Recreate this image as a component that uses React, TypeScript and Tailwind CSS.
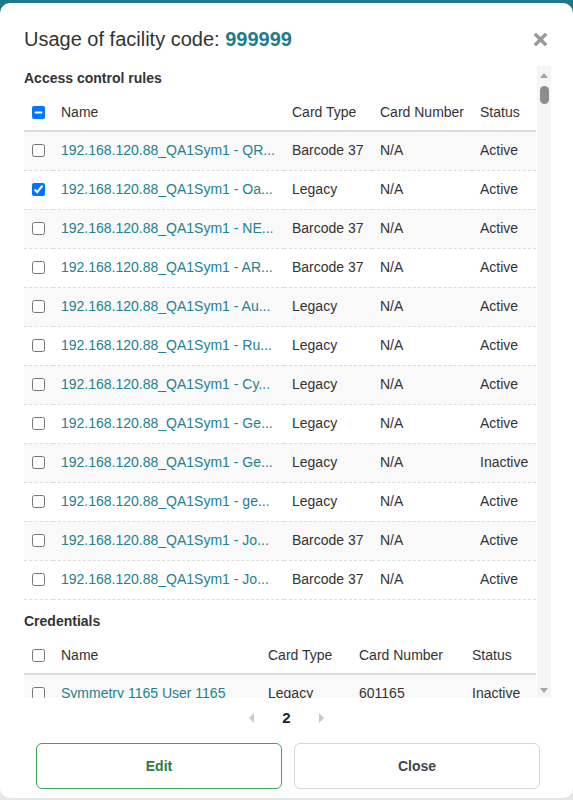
import type { ReactNode } from 'react';

type Rule = { name: string; type: string; number: string; status: string; checked?: boolean };

const rules: Rule[] = [
  { name: '192.168.120.88_QA1Sym1 - QR...', type: 'Barcode 37', number: 'N/A', status: 'Active' },
  { name: '192.168.120.88_QA1Sym1 - Oa...', type: 'Legacy', number: 'N/A', status: 'Active', checked: true },
  { name: '192.168.120.88_QA1Sym1 - NE...', type: 'Barcode 37', number: 'N/A', status: 'Active' },
  { name: '192.168.120.88_QA1Sym1 - AR...', type: 'Barcode 37', number: 'N/A', status: 'Active' },
  { name: '192.168.120.88_QA1Sym1 - Au...', type: 'Legacy', number: 'N/A', status: 'Active' },
  { name: '192.168.120.88_QA1Sym1 - Ru...', type: 'Legacy', number: 'N/A', status: 'Active' },
  { name: '192.168.120.88_QA1Sym1 - Cy...', type: 'Legacy', number: 'N/A', status: 'Active' },
  { name: '192.168.120.88_QA1Sym1 - Ge...', type: 'Legacy', number: 'N/A', status: 'Active' },
  { name: '192.168.120.88_QA1Sym1 - Ge...', type: 'Legacy', number: 'N/A', status: 'Inactive' },
  { name: '192.168.120.88_QA1Sym1 - ge...', type: 'Legacy', number: 'N/A', status: 'Active' },
  { name: '192.168.120.88_QA1Sym1 - Jo...', type: 'Barcode 37', number: 'N/A', status: 'Active' },
  { name: '192.168.120.88_QA1Sym1 - Jo...', type: 'Barcode 37', number: 'N/A', status: 'Active' },
];

const credentials: Rule[] = [
  { name: 'Symmetry 1165 User 1165', type: 'Legacy', number: '601165', status: 'Inactive' },
];

function Check({ checked, partial }: { checked?: boolean; partial?: boolean }) {
  return (
    <input
      type="checkbox"
      readOnly
      defaultChecked={checked}
      ref={(el) => {
        if (el && partial) el.indeterminate = true;
      }}
      className="m-0 block h-[13px] w-[13px]"
    />
  );
}

function UsageTable({ rows, widths, allState }: { rows: Rule[]; widths: number[]; allState: 'partial' | 'none' }) {
  return (
    <table className="w-full table-fixed border-collapse text-[14px] text-[#333]">
      <colgroup>
        {widths.map((w, i) => (
          <col key={i} style={{ width: w }} />
        ))}
      </colgroup>
      <thead>
        <tr className="h-[36px] border-b-2 border-[#dddddd]">
          <th className="pl-2 align-middle">
            <Check partial={allState === 'partial'} />
          </th>
          <th className="px-2 text-left font-normal">Name</th>
          <th className="px-2 text-left font-normal">Card Type</th>
          <th className="px-2 text-left font-normal whitespace-nowrap">Card Number</th>
          <th className="px-2 text-left font-normal">Status</th>
        </tr>
      </thead>
      <tbody>
        {rows.map((r, i) => (
          <tr key={i} className={`h-[39px] border-b border-dashed border-[#dcdcdc] ${i % 2 === 0 ? 'bg-[#f9f9f9]' : 'bg-white'}`}>
            <td className="pl-2 align-middle">
              <Check checked={r.checked} />
            </td>
            <td className="overflow-hidden px-2 whitespace-nowrap text-[#22818f]">{r.name}</td>
            <td className="px-2 whitespace-nowrap">{r.type}</td>
            <td className="px-2 whitespace-nowrap">{r.number}</td>
            <td className="px-2 whitespace-nowrap">{r.status}</td>
          </tr>
        ))}
      </tbody>
    </table>
  );
}

function Section({ title, className, children }: { title: string; className?: string; children: ReactNode }) {
  return (
    <section className={className}>
      <h3 className="h-5 text-[14px] leading-5 font-bold text-[#333]">{title}</h3>
      {children}
    </section>
  );
}

function ScrollBar() {
  return (
    <div className="flex w-[14px] shrink-0 flex-col items-center bg-[#f5f5f5]">
      <svg width="8" height="5" viewBox="0 0 8 5" className="mt-[7px]">
        <path d="M4 0L8 5H0Z" fill="#a3a3a3" />
      </svg>
      <div className="mt-[8px] h-[18px] w-[9px] rounded-full bg-[#8c8c8c]" />
      <div className="flex-1" />
      <svg width="8" height="5" viewBox="0 0 8 5" className="mb-[5px]">
        <path d="M0 0H8L4 5Z" fill="#a3a3a3" />
      </svg>
    </div>
  );
}

export default function App() {
  return (
    <div className="min-h-screen bg-[linear-gradient(#1e7a89_0_40px,#e6e6e6_40px)] pt-[3px] font-['Liberation_Sans',Arial,sans-serif]">
      <div className="flex h-[795px] flex-col rounded-[10px] bg-white">
        {/* Header */}
        <div className="flex items-center justify-between pt-6 pr-[26px] pl-6">
          <h2 className="text-[20px] leading-6 text-[#333]">
            Usage of facility code: <span className="font-bold text-[#1f7c8a]">999999</span>
          </h2>
          <svg width="13" height="13" viewBox="0 0 13 13" className="mt-[1px]">
            <path d="M2 2L11 11M11 2L2 11" stroke="#9a9a9a" strokeWidth="3.4" strokeLinecap="square" />
          </svg>
        </div>

        {/* Scrollable body */}
        <div className="mt-[15px] flex h-[632px] pr-[22px] pl-6">
          <div className="min-w-0 flex-1 overflow-hidden pt-[2px]">
            <Section title="Access control rules">
              <div className="mt-[7px]">
                <UsageTable rows={rules} widths={[29, 231, 88, 100, 64]} allState="partial" />
              </div>
            </Section>
            <Section title="Credentials" className="mt-[11px]">
              <div className="mt-[7px]">
                <UsageTable rows={credentials} widths={[29, 207, 91, 113, 72]} allState="none" />
              </div>
            </Section>
          </div>
          <div className="w-px shrink-0" />
          <ScrollBar />
        </div>

        {/* Pagination */}
        <div className="mt-[10px] flex h-5 items-center justify-center gap-[28px]">
          <svg width="5" height="10" viewBox="0 0 5 10">
            <path d="M5 0V10L0 5Z" fill="#c9c9c9" />
          </svg>
          <span className="text-[15px] font-bold text-[#222]">2</span>
          <svg width="5" height="10" viewBox="0 0 5 10">
            <path d="M0 0V10L5 5Z" fill="#c9c9c9" />
          </svg>
        </div>

        {/* Actions */}
        <div className="mt-[15px] flex gap-3 pr-[33px] pl-9">
          <button className="h-[46px] flex-1 rounded-md border border-[#41a25e] bg-white text-[14px] font-bold text-[#2d7b42]">
            Edit
          </button>
          <button className="h-[46px] flex-1 rounded-md border border-[#d3d6da] bg-white text-[14px] font-bold text-[#3b4650]">
            Close
          </button>
        </div>
      </div>
    </div>
  );
}
